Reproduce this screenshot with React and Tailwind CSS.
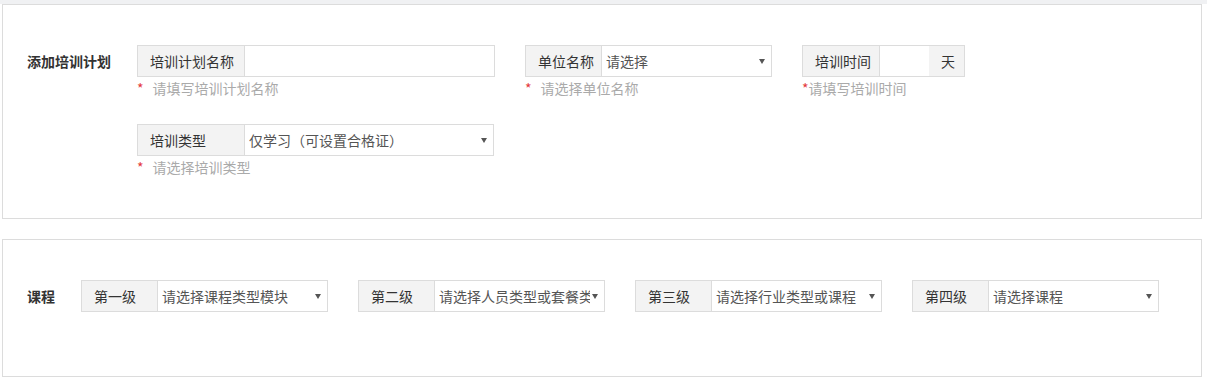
import React from 'react';

const FONT = "font-['Microsoft_YaHei','Noto_Sans_CJK_SC',sans-serif]";

function Arrow() {
  return (
    <svg className="ml-[2px] h-[5px] w-[6px] shrink-0" viewBox="0 0 6 5">
      <polygon points="0,0 6,0 3,5" fill="#555" />
    </svg>
  );
}

function Addon({ children, width }) {
  return (
    <div
      className={`flex shrink-0 items-center border-r border-[#dcdcdc] bg-[#f3f3f3] pl-[12px] text-[#333] whitespace-nowrap ${width}`}
    >
      {children}
    </div>
  );
}

function SelectGroup({ label, value, width = 'w-[247px]', addonWidth = 'w-[76px]' }) {
  return (
    <div className={`flex h-[32px] border border-[#dcdcdc] bg-white ${width}`}>
      <Addon width={addonWidth}>{label}</Addon>
      <div className="flex min-w-0 flex-1 items-center pl-[4px] pr-[6px]">
        <span className="min-w-0 flex-1 overflow-hidden whitespace-nowrap text-[#555]">{value}</span>
        <Arrow />
      </div>
    </div>
  );
}

function Hint({ children, tight }) {
  return (
    <div className="flex leading-[22px] text-[#aaa]">
      <span className={`text-[#e4393c] ${tight ? '' : 'mr-[9px]'}`}>*</span>
      <span>{children}</span>
    </div>
  );
}

export default function App() {
  return (
    <div className={`min-h-screen bg-white text-[14px] ${FONT}`}>
      <div className="h-[4px] bg-[#f0f1f3]" />

      {/* 添加培训计划 */}
      <div className="ml-[2px] w-[1200px] border border-[#dcdcdc] pt-[40px] pb-[40px]">
        <div className="flex">
          <div className="flex h-[32px] w-[134px] shrink-0 items-center pl-[24px] pt-[1px] font-bold text-[#333]">
            添加培训计划
          </div>
          <div className="flex flex-col gap-[25px]">
            <div className="flex gap-[30px]">
              <div>
                <div className="flex h-[32px] w-[358px] border border-[#dcdcdc] bg-white">
                  <Addon width="w-[107px]">培训计划名称</Addon>
                  <div className="flex-1" />
                </div>
                <Hint>请填写培训计划名称</Hint>
              </div>
              <div>
                <SelectGroup label="单位名称" value="请选择" />
                <Hint>请选择单位名称</Hint>
              </div>
              <div>
                <div className="flex h-[32px] w-[163px] border border-[#dcdcdc] bg-white">
                  <Addon width="w-[77px]">培训时间</Addon>
                  <div className="w-[49px] shrink-0" />
                  <div className="flex flex-1 items-center bg-[#f3f3f3] pl-[12px] text-[#333]">天</div>
                </div>
                <Hint tight>请填写培训时间</Hint>
              </div>
            </div>
            <div>
              <SelectGroup
                label="培训类型"
                value="仅学习（可设置合格证）"
                width="w-[357px]"
                addonWidth="w-[107px]"
              />
              <Hint>请选择培训类型</Hint>
            </div>
          </div>
        </div>
      </div>

      {/* 课程 */}
      <div className="mt-[20px] ml-[2px] w-[1200px] border border-[#dcdcdc] pt-[40px] pb-[64px]">
        <div className="flex">
          <div className="flex h-[32px] w-[78px] shrink-0 items-center pl-[24px] pt-[1px] font-bold text-[#333]">
            课程
          </div>
          <div className="flex gap-[30px]">
            <SelectGroup label="第一级" value="请选择课程类型模块" />
            <SelectGroup label="第二级" value="请选择人员类型或套餐类型" />
            <SelectGroup label="第三级" value="请选择行业类型或课程" />
            <SelectGroup label="第四级" value="请选择课程" />
          </div>
        </div>
      </div>
    </div>
  );
}
